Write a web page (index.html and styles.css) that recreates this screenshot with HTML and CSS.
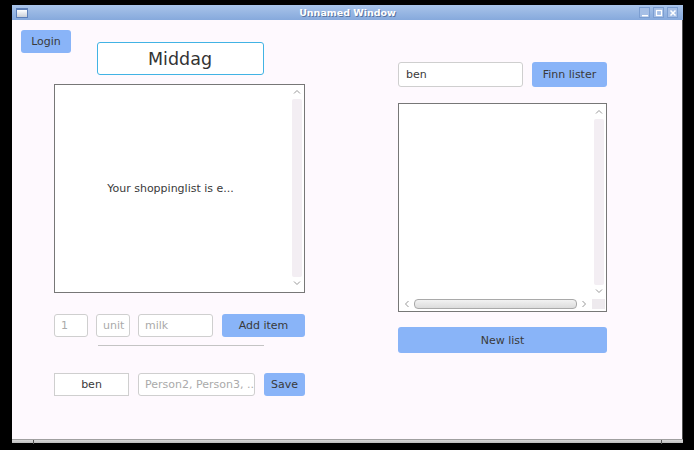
FILE: index.html
```html
<!DOCTYPE html>
<html>
<head>
<meta charset="utf-8">
<link rel="stylesheet" href="styles.css">
</head>
<body>
<div class="window">
  <div class="titlebar">
    <span class="wicon"></span>
    <span class="title">Unnamed Window</span>
    <div class="wbtns">
      <span class="wbtn"><svg width="8" height="8" viewBox="0 0 8 8"><rect x="1" y="6" width="6" height="1.4" fill="#fff"/></svg></span>
      <span class="wbtn"><svg width="8" height="8" viewBox="0 0 8 8"><rect x="1.5" y="1.5" width="5" height="5" fill="none" stroke="#fff" stroke-width="1.2"/></svg></span>
      <span class="wbtn"><svg width="8" height="8" viewBox="0 0 8 8"><path d="M1.5 1.5L6.5 6.5M6.5 1.5L1.5 6.5" stroke="#fff" stroke-width="1.5"/></svg></span>
    </div>
  </div>
  <div class="content">
    <div class="login-col">
      <button class="btn login">Login</button>
    </div>
    <div class="left">
      <div class="name-field">Middag</div>
      <div class="listbox">
        <div class="list-body"><span class="empty">Your shoppinglist is e...</span></div>
        <div class="vscroll">
          <svg class="arrow" width="10" height="8" viewBox="0 0 10 8"><path d="M2 5.5L5 2.5L8 5.5" fill="none" stroke="#999" stroke-width="1"/></svg>
          <div class="vtrack"></div>
          <svg class="arrow" width="10" height="8" viewBox="0 0 10 8"><path d="M2 2.5L5 5.5L8 2.5" fill="none" stroke="#999" stroke-width="1"/></svg>
        </div>
      </div>
      <div class="row item-row">
        <div class="field ph w34">1</div>
        <div class="field ph w34">unit</div>
        <div class="field ph w75">milk</div>
        <button class="btn add">Add item</button>
      </div>
      <div class="sep"></div>
      <div class="row share-row">
        <div class="field center w75">ben</div>
        <div class="field ph w117">Person2, Person3, ...</div>
        <button class="btn save">Save</button>
      </div>
    </div>
    <div class="right">
      <div class="row search-row">
        <div class="field user">ben</div>
        <button class="btn finn">Finn lister</button>
      </div>
      <div class="listbox2">
        <div class="list-body"></div>
        <div class="vscroll2">
          <svg class="arrow" width="10" height="8" viewBox="0 0 10 8"><path d="M2 5.5L5 2.5L8 5.5" fill="none" stroke="#999" stroke-width="1"/></svg>
          <div class="vtrack"></div>
          <svg class="arrow" width="10" height="8" viewBox="0 0 10 8"><path d="M2 2.5L5 5.5L8 2.5" fill="none" stroke="#999" stroke-width="1"/></svg>
        </div>
        <div class="hscroll">
          <svg class="harrow" width="8" height="10" viewBox="0 0 8 10"><path d="M5.5 2L2.5 5L5.5 8" fill="none" stroke="#999" stroke-width="1"/></svg>
          <div class="hthumb"></div>
          <svg class="harrow" width="8" height="10" viewBox="0 0 8 10"><path d="M2.5 2L5.5 5L2.5 8" fill="none" stroke="#999" stroke-width="1"/></svg>
        </div>
        <div class="corner"></div>
      </div>
      <button class="btn newlist">New list</button>
    </div>
  </div>
  <div class="bottombar">
    <span class="tick t1"></span>
    <span class="tick t2"></span>
  </div>
</div>
</body>
</html>
```

FILE: styles.css
```css
html, body {
  margin: 0;
  padding: 0;
  background: #000;
  width: 694px;
  height: 450px;
  overflow: hidden;
  font-family: "DejaVu Sans", sans-serif;
}
.window {
  margin: 5px 0 0 12px;
  width: 671px;
}
.titlebar {
  height: 15px;
  background: linear-gradient(#a9c4ea, #86a9dc);
  display: flex;
  align-items: center;
  position: relative;
}
.wicon {
  width: 10px;
  height: 7px;
  margin-left: 4px;
  background: linear-gradient(#fff, #c9cfd8);
  border: 1px solid #5d7fb8;
  border-top-width: 2px;
}
.title {
  flex: 1;
  text-align: center;
  color: #fff;
  font-weight: bold;
  font-size: 9.5px;
  text-shadow: 1px 1px 0 #5a75a0;
  padding-left: 28px;
}
.wbtns {
  display: flex;
  gap: 3px;
  margin-right: 5px;
}
.wbtn {
  width: 9px;
  height: 9px;
  background: #a6bfe6;
  border: 1px solid #7c9ed1;
  display: flex;
  align-items: center;
  justify-content: center;
}
.content {
  height: 419px;
  background: #fef9fe;
  border-right: 1px solid #555;
  display: flex;
  box-sizing: border-box;
}
.login-col {
  width: 42px;
  flex: none;
}
.btn {
  font-family: "DejaVu Sans", sans-serif;
  font-size: 11px;
  color: #3a3a3a;
  background: #89b4f8;
  border: none;
  border-radius: 3px;
  padding: 0;
  display: block;
}
.login {
  margin: 10px 0 0 9px;
  width: 50px;
  height: 23px;
  position: relative;
}
.left {
  width: 251px;
  flex: none;
  padding-top: 22px;
  display: flex;
  flex-direction: column;
}
.name-field {
  align-self: center;
  width: 167px;
  height: 33px;
  box-sizing: border-box;
  border: 1.5px solid #42b3e4;
  border-radius: 3px;
  background: #fff;
  font-size: 17.5px;
  color: #333;
  display: flex;
  align-items: center;
  justify-content: center;
  margin-left: 1px;
}
.listbox {
  margin-top: 9px;
  height: 209px;
  border: 1px solid #777;
  box-sizing: border-box;
  background: #fff;
  display: flex;
}
.list-body {
  flex: 1;
  display: flex;
  align-items: center;
  justify-content: center;
}
.empty {
  font-size: 11px;
  color: #3a3a3a;
  padding-right: 4px;
}
.vscroll, .vscroll2 {
  width: 14px;
  display: flex;
  flex-direction: column;
  align-items: center;
}
.vscroll {
  padding: 1px 0 2px;
}
.arrow {
  display: block;
  margin: 2px 0 3px;
}
.vtrack {
  flex: 1;
  width: 10px;
  background: #f3eef3;
  border-radius: 2px;
}
.row {
  display: flex;
  align-items: center;
}
.item-row {
  margin-top: 21px;
  height: 23px;
}
.field {
  height: 100%;
  box-sizing: border-box;
  border: 1px solid #cfcfcf;
  border-radius: 3px;
  background: #fff;
  font-size: 11px;
  color: #3a3a3a;
  display: flex;
  align-items: center;
  padding-left: 6px;
  overflow: hidden;
  white-space: nowrap;
  flex: none;
}
.ph { color: #aaa; }
.center { justify-content: center; padding-left: 0; border-radius: 0; }
.w34 { width: 34px; margin-right: 8px; }
.w75 { width: 75px; margin-right: 9px; }
.w117 { width: 117px; margin-right: 9px; }
.add {
  width: 83px;
  height: 23px;
}
.sep {
  align-self: center;
  width: 166px;
  height: 1px;
  background: #c4c4c4;
  margin-top: 8px;
  margin-left: 2px;
}
.share-row {
  margin-top: 27px;
  height: 23px;
}
.save {
  width: 41px;
  height: 23px;
}
.right {
  margin-left: 93px;
  width: 209px;
  flex: none;
  padding-top: 42px;
  display: flex;
  flex-direction: column;
}
.search-row {
  height: 25px;
}
.user {
  width: 125px;
  margin-right: 9px;
  padding-left: 7px;
}
.finn {
  width: 75px;
  height: 25px;
}
.listbox2 {
  margin-top: 16px;
  height: 209px;
  border: 1px solid #777;
  box-sizing: border-box;
  background: #fff;
  display: grid;
  grid-template-columns: 1fr 14px;
  grid-template-rows: 1fr 12px;
}
.vscroll2 {
  padding: 2px 0 1px;
}
.hscroll {
  display: flex;
  align-items: center;
  padding: 0 2px 2px 2px;
}
.harrow { display: block; margin: 0 2px; }
.hthumb {
  flex: 1;
  height: 8px;
  border: 1px solid #a9a9a9;
  border-radius: 4px;
  background: linear-gradient(#f2f2f2, #dcdcdc);
  margin: 0 1px;
}
.corner {
  background: #eeeaee;
  margin: 0 1px 2px 0;
}
.newlist {
  margin-top: 15px;
  width: 209px;
  height: 26px;
}
.bottombar {
  height: 4px;
  background: linear-gradient(#d8d8d8, #bdbdbd);
  border-top: 1px solid #a0a0a0;
  box-sizing: border-box;
  position: relative;
  display: flex;
  justify-content: space-between;
  padding: 0 21px 0 21px;
}
.tick {
  width: 1px;
  height: 4px;
  background: #555;
}
```
